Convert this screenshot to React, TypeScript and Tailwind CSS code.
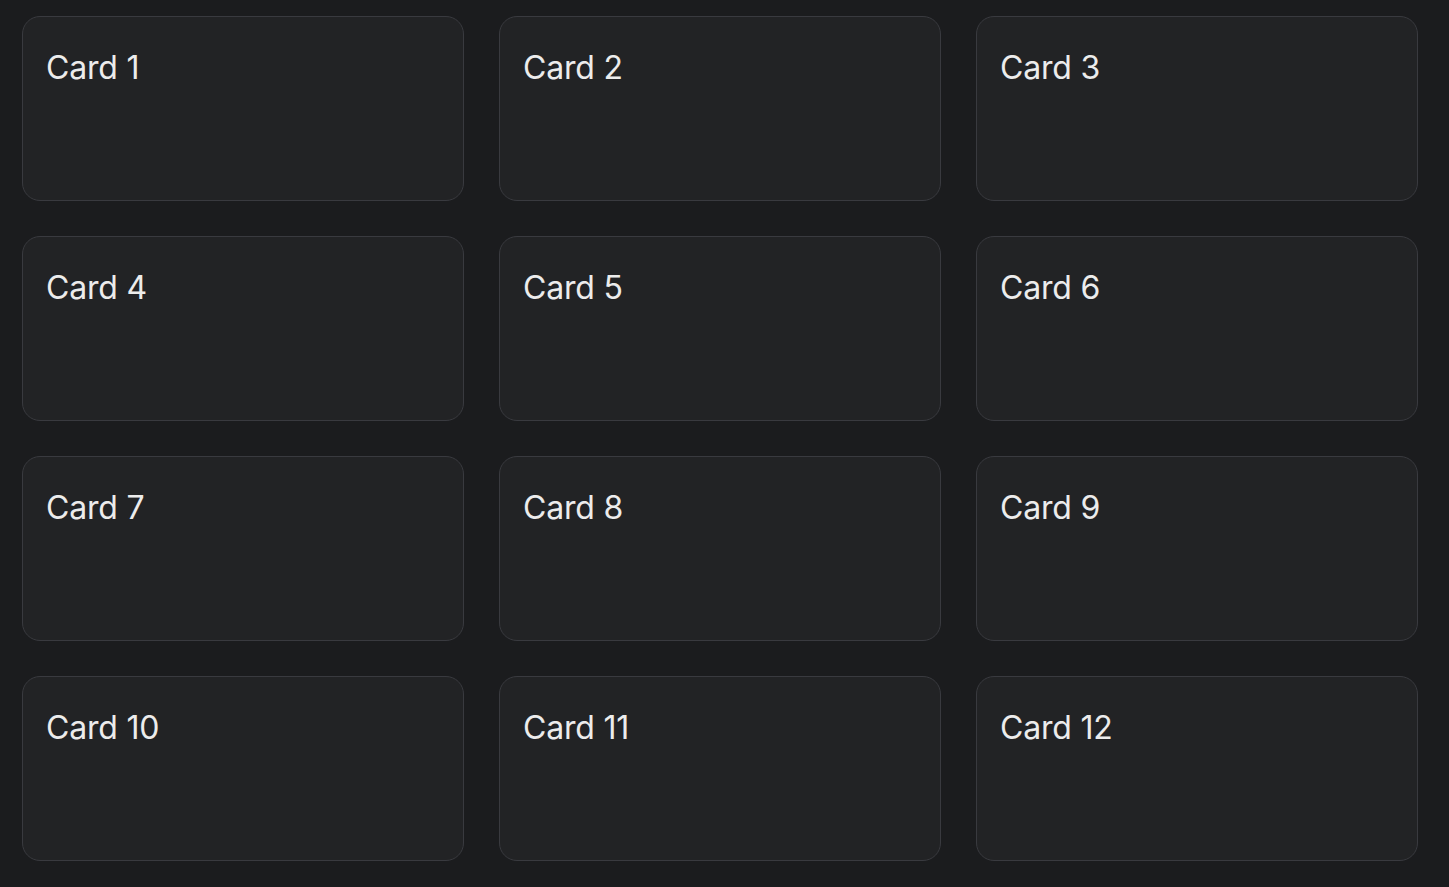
export default function App() {
    const cards = Array.from({ length: 12 }, (_, i) => i + 1);

    return <div className="min-h-screen bg-[#1b1c1e] pl-[22px] pr-[31px] pt-4 pb-[26px]" style={{ fontFamily: "Inter, 'Noto Sans', sans-serif" }}>
        <div className="grid grid-cols-3 gap-[35px]">
            {cards.map((n) =>
                <div key={n} className="h-[185px] rounded-[18px] border border-[#393a3f] bg-[#222325] px-[23px] pt-[27px]">
                    <h2 className="text-[32px] leading-[48px] tracking-[-0.2px] text-[#ececec]">Card {n}</h2>
                </div>
            )}
        </div>
    </div>
}
